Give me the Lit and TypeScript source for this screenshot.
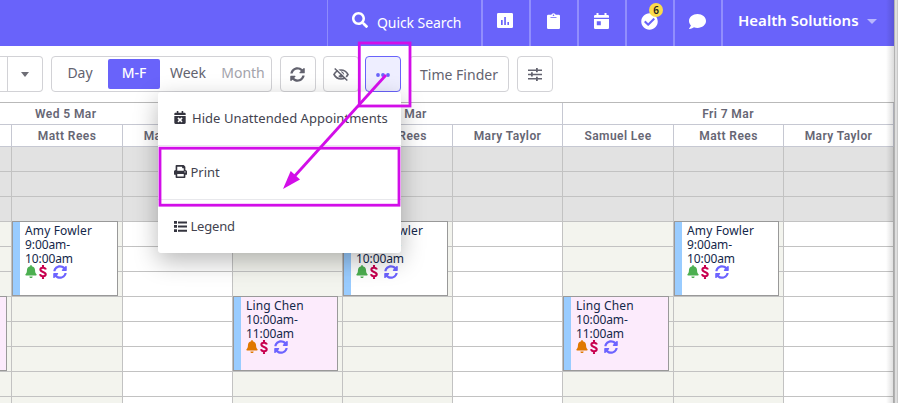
import { LitElement, html, css, svg, nothing } from "lit";
import { customElement, property } from "lit/decorators.js";

const ICONS: Record<string, { box: string; body: unknown }> = {
  search: { box: "0 0 512 512", body: svg`<path d="M505 442.7L405.300 343c-4.500-4.500-10.600-7-17-7H372c27.600-35.300 44-79.700 44-128C416 93.100 322.900 0 208 0S0 93.100 0 208s93.100 208 208 208c48.300 0 92.700-16.400 128-44v16.300c0 6.400 2.500 12.500 7 17l99.700 99.700c9.400 9.400 24.600 9.400 33.900 0l28.300-28.300c9.400-9.400 9.400-24.600.100-34zM208 336c-70.700 0-128-57.200-128-128 0-70.700 57.200-128 128-128 70.700 0 128 57.200 128 128 0 70.700-57.200 128-128 128z"/>` },
  chart: { box: "0 0 16 15", body: svg`<path fill-rule="evenodd" d="M1.300 0h13.400A1.300 1.300 0 0 1 16 1.300v12.400a1.300 1.300 0 0 1-1.300 1.300H1.300A1.300 1.300 0 0 1 0 13.700V1.300A1.300 1.300 0 0 1 1.300 0zM4 7v5h1.700V7zM7.200 4v8h1.700V4zM10.400 9v3H12V9z"/>` },
  clipboard: { box: "0 0 13 16", body: svg`<path fill-rule="evenodd" d="M1.200 1.800H4.300A2.300 2.300 0 0 1 8.700 1.800h3.100A1.200 1.200 0 0 1 13 3v11.800a1.200 1.200 0 0 1-1.200 1.200H1.200A1.200 1.200 0 0 1 0 14.800V3a1.200 1.200 0 0 1 1.200-1.200zM6.500 1.400a.8.8 0 1 0 0 1.600.8.800 0 0 0 0-1.600zM3.500 4.200v.9h6v-.9z"/>` },
  day: { box: "0 0 15 16", body: svg`<path fill-rule="evenodd" d="M2.500 0h2v2h6V0h2v2h1.300A1.200 1.200 0 0 1 15 3.200V4.800H0V3.200A1.200 1.200 0 0 1 1.200 2h1.300zM0 5.900h15v8.900a1.200 1.200 0 0 1-1.200 1.200H1.200A1.200 1.200 0 0 1 0 14.800zM2.800 8.200v4h4v-4z"/>` },
  cross: { box: "0 0 448 512", body: svg`<path d="M436 160H12c-6.600 0-12-5.400-12-12v-36c0-26.500 21.500-48 48-48h48V12c0-6.600 5.400-12 12-12h40c6.600 0 12 5.400 12 12v52h128V12c0-6.600 5.400-12 12-12h40c6.600 0 12 5.400 12 12v52h48c26.500 0 48 21.500 48 48v36c0 6.600-5.400 12-12 12zM12 192h424c6.600 0 12 5.400 12 12v260c0 26.500-21.500 48-48 48H48c-26.500 0-48-21.500-48-48V204c0-6.600 5.400-12 12-12zm257.300 160l48.100-48.100c4.700-4.700 4.700-12.300 0-17l-28.300-28.300c-4.700-4.700-12.300-4.700-17 0L224 306.700l-48.100-48.100c-4.700-4.700-12.300-4.700-17 0l-28.300 28.300c-4.700 4.700-4.700 12.300 0 17l48.100 48.100-48.100 48.100c-4.700 4.700-4.700 12.300 0 17l28.300 28.300c4.700 4.700 12.300 4.700 17 0l48.100-48.100 48.100 48.100c4.700 4.700 12.300 4.700 17 0l28.300-28.300c4.700-4.700 4.700-12.300 0-17L269.300 352z"/>` },
  check: { box: "0 0 512 512", body: svg`<path d="M504 256c0 137-111 248-248 248S8 393 8 256 119 8 256 8s248 111 248 248zM227.300 387.300l184-184c6.200-6.200 6.200-16.400 0-22.600l-22.600-22.600c-6.200-6.200-16.400-6.200-22.600 0L216 308.100l-70.100-70.100c-6.200-6.200-16.400-6.200-22.600 0l-22.600 22.600c-6.200 6.200-6.200 16.400 0 22.600l104 104c6.200 6.200 16.400 6.200 22.600 0z"/>` },
  comment: { box: "0 0 512 512", body: svg`<path d="M256 32C114.600 32 0 125.100 0 240c0 49.600 21.400 95 57 130.700C44.500 421.100 2.700 466 2.200 466.500c-2.200 2.300-2.800 5.700-1.500 8.700S4.800 480 8 480c66.300 0 116-31.800 140.600-51.400 32.700 12.300 69 19.400 107.400 19.400 141.400 0 256-93.100 256-208S397.400 32 256 32z"/>` },
  sync: { box: "0 0 512 512", body: svg`<path d="M370.700 133.300C339.500 104 298.900 88 255.800 88c-77.500.100-144.300 53.200-162.800 126.900-1.300 5.400-6.100 9.100-11.700 9.100H24.100c-7.500 0-13.200-6.800-11.800-14.200C33.900 94.900 134.800 8 256 8c66.400 0 126.800 26.100 171.300 68.700L463 41c15.100-15.100 41-4.400 41 17v134c0 13.300-10.700 24-24 24H346c-21.400 0-32.100-25.900-17-41l41.700-41.700zM32 296h134c21.400 0 32.100 25.900 17 41l-41.800 41.800c31.300 29.300 71.800 45.300 114.900 45.300 77.400-.100 144.300-53.100 162.800-126.800 1.300-5.400 6.100-9.100 11.700-9.100h57.300c7.500 0 13.200 6.800 11.800 14.200C478.100 417.100 377.200 504 256 504c-66.400 0-126.800-26.100-171.300-68.700L49 471c-15.100 15.100-41 4.400-41-17V320c0-13.300 10.700-24 24-24z"/>` },
  eye: { box: "0 0 16 13", body: svg`<path fill="none" stroke="currentColor" stroke-width="1.600" d="M1 6.500C2.600 3.600 5.100 2 8 2s5.400 1.600 7 4.500C13.400 9.400 10.900 11 8 11S2.600 9.400 1 6.500z"/><path d="M8 3.300a3.200 3.200 0 1 1-2.800 4.800L8 6.500z"/><path fill="none" stroke="#fff" stroke-width="1.200" d="M2.900-.3l12 11.700"/><path fill="none" stroke="currentColor" stroke-width="1.500" d="M1.700.5l12.600 12"/>` },
  dots: { box: "0 0 14 4", body: svg`<circle cx="2" cy="2" r="1.900"/><circle cx="7" cy="2" r="1.900"/><circle cx="12" cy="2" r="1.900"/>` },
  sliders: { box: "0 0 14 13", body: svg`<path d="M0 1.500h8V0h1.800v1.500H14V3H9.800v1.300H8V3H0zM0 5.700h3V4.300h1.800v1.400H14v1.500H4.800v1.400H3V7.200H0zM0 10h8V8.700h1.800V10H14v1.500H9.800V13H8v-1.500H0z"/>` },
  print: { box: "0 0 512 512", body: svg`<path d="M448 192V77.300a32 32 0 0 0-9.400-22.600L393.400 9.400A32 32 0 0 0 370.700 0H96a32 32 0 0 0-32 32v160c-35.300 0-64 28.700-64 64v112a16 16 0 0 0 16 16h48v96a32 32 0 0 0 32 32h320a32 32 0 0 0 32-32v-96h48a16 16 0 0 0 16-16V256c0-35.300-28.700-64-64-64zm-64 256H128v-96h256zm0-224H128V64h192v48a16 16 0 0 0 16 16h48zm48 72a24 24 0 1 1 0-48 24 24 0 0 1 0 48z"/>` },
  list: { box: "0 0 13 11", body: svg`<path d="M0 0h3v2.700H0zM0 4.100h3v2.700H0zM0 8.300h3V11H0zM4 .4h9v2H4zM4 4.500h9v2H4zM4 8.700h9v2H4z"/>` },
  bell: { box: "0 0 448 512", body: svg`<path d="M224 512c35.300 0 64-28.700 64-64H160c0 35.300 28.600 64 64 64zm215.400-149.700c-19.300-20.800-55.500-52-55.500-154.300 0-77.700-54.500-139.900-127.900-155.200V32c0-17.700-14.300-32-32-32s-32 14.300-32 32v20.800C118.600 68.100 64.100 130.300 64.100 208c0 102.300-36.200 133.500-55.500 154.300A31.300 31.300 0 0 0 0 384c.1 16.400 13 32 32.100 32h383.800c19.100 0 32-15.600 32.100-32a31.300 31.300 0 0 0-8.600-21.700z"/>` },
  dollar: { box: "0 0 8 14", body: svg`<path fill="none" stroke="currentColor" stroke-width="2.100" d="M6.800 4.600C6.500 3.300 5.500 2.700 4 2.700 2.300 2.700 1.400 3.400 1.400 4.600c0 2.900 5.300 1.700 5.300 4.700 0 1.300-1 2-2.700 2S1.300 10.600 1.100 9.200M4 .1v2.400M4 11.400v2.500"/>` },
};

const icon = (name: string, cls: string) =>
  html`<svg class="icon ${cls}" viewBox=${ICONS[name].box} fill="currentColor" aria-hidden="true">${ICONS[name].body}</svg>`;

@customElement("appointment-card")
export class AppointmentCard extends LitElement {
  @property() name = "";
  @property() from = "";
  @property() to = "";
  @property({ type: Boolean, reflect: true }) pending = false;

  static styles = css`
    :host { display: flex; box-sizing: border-box; height: 75px; border: 1px solid #999; background: #fff; overflow: hidden; }
    :host([pending]) { background: #fcebfc; }
    .bar { width: 7px; flex: none; background: #99ccff; }
    .body { padding: 2px 0 0 5px; font: 12px/14px "Noto Sans", sans-serif; color: #14274a; white-space: nowrap; }
    .line { display: block; letter-spacing: -.1px; }
    .title { letter-spacing: .15px; }
    .icons { display: flex; align-items: center; height: 13px; margin-top: -1px; }
    .icon { display: block; flex: none; }
    .bell { width: 12px; height: 13px; color: #4caf50; }
    :host([pending]) .bell { color: #e07800; }
    .dollar { width: 8px; height: 14px; margin-left: 2px; color: #c8004f; }
    .sync { width: 14px; height: 14px; margin-left: 6px; color: #6c63ff; }
  `;

  render() {
    return html`<div class="bar"></div>
      ${this.name
        ? html`<div class="body">
            <span class="line title">${this.name}</span>
            <span class="line">${this.from}-</span>
            <span class="line">${this.to}</span>
            <div class="icons">${icon("bell", "bell")}${icon("dollar", "dollar")}${icon("sync", "sync")}</div>
          </div>`
        : nothing}`;
  }
}

type Kind = "samuel" | "matt" | "mary";
const NAMES: Record<Kind, string> = { samuel: "Samuel Lee", matt: "Matt Rees", mary: "Mary Taylor" };
const COLUMNS: Kind[] = ["samuel", "matt", "mary", "samuel", "matt", "mary", "samuel", "matt", "mary"];

@customElement("app-root")
export class AppRoot extends LitElement {
  static styles = css`
    :host { display: block; position: relative; width: 898px; height: 403px; overflow: hidden; background: #fff; font-family: "Noto Sans", sans-serif; color: #5f6070; }
    * { box-sizing: border-box; }
    .icon { display: block; flex: none; }
    .top { display: flex; justify-content: flex-end; height: 46px; width: 895px; background: #6963fa; color: #fff; }
    .search { display: flex; width: 154px; padding-left: 24px; border-left: 1px solid #8e8bfc; font-size: 14px; line-height: 46px; }
    .search span { margin-left: 9px; letter-spacing: -.08px; }
    .glass { width: 16px; height: 16px; margin-top: 12px; }
    .tool { position: relative; width: 48px; border-left: 2px solid #918efc; display: flex; justify-content: center; padding-top: 13px; }
    .i-chart { width: 16px; height: 15px; margin-right: 2px; }
    .i-clip { width: 13px; height: 16px; margin-right: 1px; }
    .i-day { width: 15px; height: 16px; margin-right: 1px; }
    .i-check { width: 17px; height: 17px; margin-right: 1px; }
    .i-comment { width: 17px; height: 17px; margin-right: 1px; }
    .badge { position: absolute; left: 22px; top: 3px; width: 14px; height: 14px; border-radius: 50%; background: #fbdc4b; color: #222; font: 600 10px/14px "Noto Sans", sans-serif; text-align: center; }
    .account { display: flex; width: 174px; border-left: 2px solid #918efc; padding-left: 15px; font-weight: 600; font-size: 15px; line-height: 41px; white-space: nowrap; }
    .caret { width: 0; height: 0; border: 5px solid transparent; border-top-color: #b8b6fd; border-bottom: 0; margin: 19px 0 0 8px; }
    .bar { display: flex; height: 56px; padding-top: 10px; align-items: flex-start; font-size: 14px; }
    .box { height: 36px; border: 1px solid #d2d2d6; border-radius: 4px; display: flex; align-items: center; justify-content: center; flex: none; background: #fff; color: #63636f; }
    .drop { width: 44px; margin-left: -1px; border-radius: 0 4px 4px 0; border-left: 0; justify-content: flex-end; }
    .drop .cell { width: 35px; height: 34px; border-left: 1px solid #d2d2d6; display: flex; justify-content: center; padding-top: 15px; }
    .down { width: 0; height: 0; border: 4.500px solid transparent; border-top: 5px solid #6e6e76; border-bottom: 0; }
    .range { width: 221px; margin-left: 8px; justify-content: flex-start; }
    .seg { height: 30px; line-height: 28px; text-align: center; }
    .seg-day { width: 56px; }
    .seg-mf { width: 52px; background: #6963fa; color: #fff; border-radius: 2px; font-weight: 500; }
    .seg-week { width: 56px; }
    .seg-month { width: 54px; color: #a3a3ab; }
    .sq { width: 36px; }
    .refresh { margin-left: 8px; }
    .hide { margin-left: 7px; }
    .more { margin-left: 6px; border-color: #6963fa; background: #eeeeff; color: #6963fa; }
    .finder { margin-left: 8px; width: 100px; }
    .filter { margin-left: 8px; }
    .i-sync { width: 15px; height: 15px; margin: 1px 1px 0 0; }
    .i-eye { width: 16px; height: 13px; margin-right: 1px; }
    .i-dots { width: 14px; height: 4px; margin-top: 2px; }
    .i-sliders { width: 14px; height: 13px; margin-top: 1px; }
    .calendar { width: 894px; height: 301px; border-top: 1px solid #b9b9b9; font-family: Roboto, sans-serif; }
    .dates { display: grid; grid-template-columns: 233px 330px 331px; height: 22px; }
    .date, .name { border-right: 1px solid #c6c8d2; border-bottom: 1px solid #c6c8d2; font-weight: 600; font-size: 12px; letter-spacing: .42px; display: flex; align-items: center; justify-content: center; white-space: nowrap; overflow: hidden; color: #666674; }
    .date:first-child { justify-content: flex-start; padding-left: 35px; }
    .cols { display: grid; grid-template-columns: 12px 111px 110px 110px 110px 110px 111px 110px 110px; }
    .col { position: relative; min-width: 0; }
    .name { height: 22px; }
    .slot { height: 25px; border-right: 1px solid #c2c2c2; border-bottom: 1px solid #c2c2c2; background: #f3f4ee; }
    .mary .slot { background: #fff; }
    .col .closed { background: #e2e2e2; }
    .event { position: absolute; left: 0; top: 96px; width: calc(100% - 5px); }
    .event.late { top: 171px; }
    .event.clip { left: -99px; width: 106px; }
    .edge { position: absolute; right: 0; top: 0; width: 14px; height: 403px; background: linear-gradient(90deg, transparent 0 2px, rgba(0,0,0,.14) 10px, #b2b2b2 10px 11px, #dedede 11px 13px, #c9c9c9 13px); }
    .menu { position: absolute; left: 158px; top: 92px; width: 243px; height: 161px; background: #fff; border-radius: 3px; box-shadow: 0 8px 24px rgba(0,0,0,.28); font-size: 13px; color: #43434f; }
    .item { display: flex; align-items: center; height: 54px; padding: 0 0 2px 16px; border-bottom: 1px solid #e8e8ec; white-space: nowrap; }
    .item:last-child { border: 0; height: 53px; padding-bottom: 1px; letter-spacing: -.2px; }
    .item .icon { color: #34343f; }
    .wide { letter-spacing: .04px; }
    .m-cross { width: 12px; height: 13px; margin-right: 6px; }
    .m-print { width: 13px; height: 13px; margin-right: 3.500px; }
    .m-list { width: 13px; height: 11px; margin-right: 3.500px; }
    .marks { position: absolute; left: 0; top: 0; width: 898px; height: 403px; }
  `;

  private tool(name: string, cls: string, badge = "") {
    return html`<div class="tool">${icon(name, cls)}${badge ? html`<span class="badge">${badge}</span>` : nothing}</div>`;
  }

  private column(kind: Kind, i: number) {
    return html`<div class="col ${kind}">
      <div class="name">${i ? NAMES[kind] : ""}</div>
      ${Array.from({ length: 11 }, (_, r) => html`<div class="slot ${r < 3 ? "closed" : ""}"></div>`)}
      ${kind === "matt" ? html`<appointment-card class="event" name="Amy Fowler" from="9:00am" to="10:00am"></appointment-card>` : nothing}
      ${kind === "samuel" ? html`<appointment-card class="event late ${i ? "" : "clip"}" pending name=${i ? "Ling Chen" : ""} from="10:00am" to="11:00am"></appointment-card>` : nothing}
    </div>`;
  }

  render() {
    return html`
      <header class="top">
        <div class="search">${icon("search", "glass")}<span>Quick Search</span></div>
        ${this.tool("chart", "i-chart")} ${this.tool("clipboard", "i-clip")} ${this.tool("day", "i-day")}
        ${this.tool("check", "i-check", "6")} ${this.tool("comment", "i-comment")}
        <div class="account">Health Solutions<i class="caret"></i></div>
      </header>
      <nav class="bar">
        <div class="box drop"><div class="cell"><i class="down"></i></div></div>
        <div class="box range">
          <span class="seg seg-day">Day</span><span class="seg seg-mf">M-F</span><span class="seg seg-week">Week</span><span class="seg seg-month">Month</span>
        </div>
        <div class="box sq refresh">${icon("sync", "i-sync")}</div>
        <div class="box sq hide">${icon("eye", "i-eye")}</div>
        <div class="box sq more">${icon("dots", "i-dots")}</div>
        <div class="box finder">Time Finder</div>
        <div class="box sq filter">${icon("sliders", "i-sliders")}</div>
      </nav>
      <main class="calendar">
        <div class="dates"><div class="date">Wed 5 Mar</div><div class="date">Thu 6 Mar</div><div class="date">Fri 7 Mar</div></div>
        <div class="cols">${COLUMNS.map((k, i) => this.column(k, i))}</div>
      </main>
      <div class="edge"></div>
      <div class="menu">
        <div class="item wide">${icon("cross", "m-cross")}Hide Unattended Appointments</div>
        <div class="item">${icon("print", "m-print")}Print</div>
        <div class="item">${icon("list", "m-list")}Legend</div>
      </div>
      <svg class="marks" viewBox="0 0 898 403" fill="none" stroke="#d20ee8" stroke-width="2.800">
        <rect x="359.300" y="43" width="50.700" height="63"/>
        <rect x="160" y="148.200" width="239" height="57"/>
        <path d="M386 75L292 179"/>
        <path d="M283 189L290.700 171L300 179.500Z" fill="#d20ee8" stroke="none"/>
      </svg>`;
  }
}
